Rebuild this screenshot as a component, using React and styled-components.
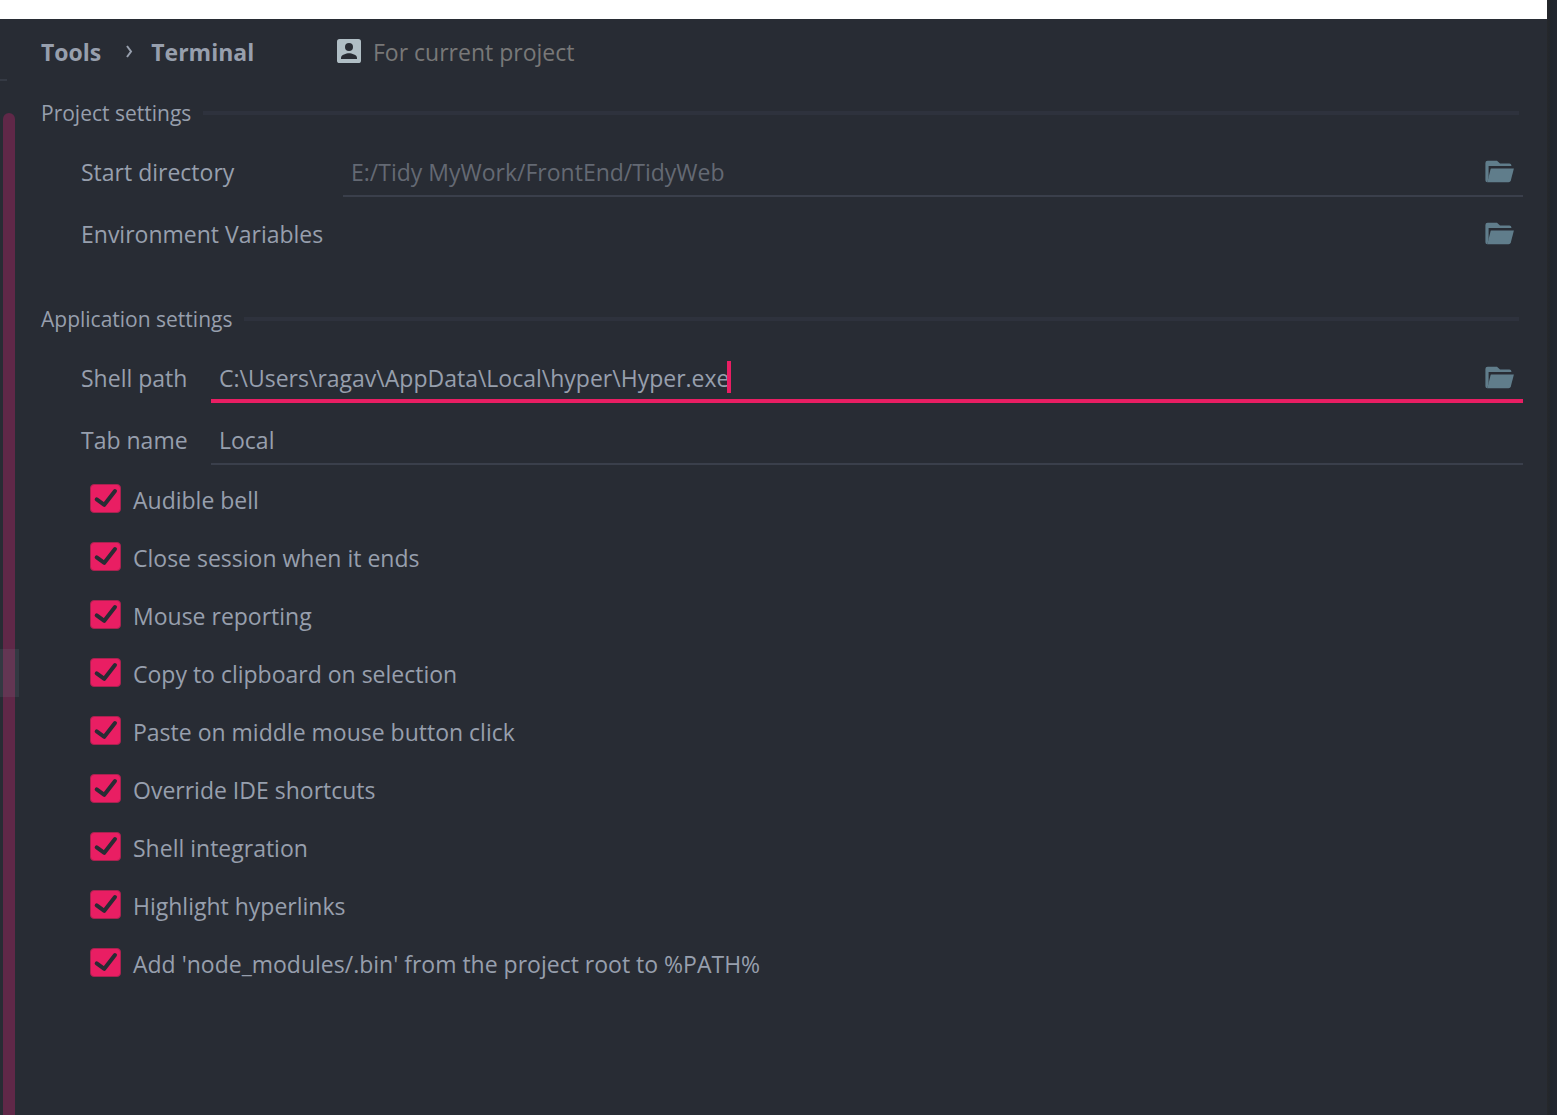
import React, { useState } from "react";
import styled, { createGlobalStyle } from "styled-components";

const accent = "#e91e63";
const surface = "#282c34";
const text = "#979fad";
const line = "#3a3f4b";

const GlobalStyle = createGlobalStyle`
  *, *::before, *::after { box-sizing: border-box; }
  body {
    margin: 0;
    background: ${surface};
    color: ${text};
    font-family: "Open Sans", "Noto Sans", sans-serif;
    font-size: 23px;
    line-height: 32px;
  }
  input, button { font: inherit; color: inherit; }
`;

const Window = styled.div`
  display: flex;
  min-height: 100vh;
`;

const Dialog = styled.div`
  flex: 1;
  min-width: 0;
  display: flex;
  flex-direction: column;
`;

const TitleBar = styled.div`
  height: 19px;
  background: #ffffff;
`;

const Body = styled.div`
  flex: 1;
  display: flex;
`;

const WindowEdge = styled.div`
  width: 10px;
  background: linear-gradient(to right, #26282b, #20252c 40%, #222730);
`;

const Tree = styled.aside`
  position: relative;
  width: 19px;
  display: flex;
  flex-direction: column;
`;

const TreeSearch = styled.div`
  width: 7px;
  height: 62px;
  margin-bottom: 32px;
  border-bottom: 2px solid #353a44;
`;

const ScrollThumb = styled.div`
  flex: 1;
  width: 12px;
  margin-left: 3px;
  border-radius: 6px 6px 0 0;
  background: #602848;
`;

const TreeSelection = styled.div`
  position: absolute;
  top: 630px;
  left: 0;
  width: 100%;
  height: 48px;
  background: rgba(120, 144, 156, 0.14);
`;

const Content = styled.main`
  flex: 1;
  min-width: 0;
  padding: 0 24px 40px 22px;
`;

const Header = styled.header`
  display: flex;
  align-items: center;
  height: 68px;
  padding-bottom: 2px;
`;

const Crumbs = styled.nav`
  display: flex;
  align-items: center;
  gap: 18px;
  width: 296px;
  font-weight: 700;
  svg { margin-left: 6px; }
`;

const Crumb = styled.a`
  color: inherit;
  text-decoration: none;
`;

const Scope = styled.div`
  display: flex;
  align-items: center;
  gap: 12px;
  color: #787878;
  svg { margin-bottom: 2px; }
`;

const Section = styled.section`
  margin-bottom: 34px;
`;

const SectionTitle = styled.h2`
  display: flex;
  align-items: center;
  gap: 12px;
  height: 52px;
  margin: 0 4px 10px 0;
  font-size: 21px;
  font-weight: 400;
  &::after {
    content: "";
    flex: 1;
    height: 4px;
    background: #2e323d;
  }
`;

const Fields = styled.div`
  display: flex;
  flex-direction: column;
  gap: 14px;
  padding-left: 40px;
`;

const Row = styled.div`
  display: grid;
  grid-template-columns: ${(p) => p.$label}px 1fr;
  align-items: center;
  height: 48px;
`;

const Label = styled.label`
  padding-bottom: 2px;
  white-space: nowrap;
`;

const Field = styled.div`
  display: flex;
  align-items: center;
  height: 48px;
  padding: 0 8px 2px;
  box-shadow: ${(p) =>
    p.$plain ? "none" : p.$active ? `inset 0 -4px ${accent}` : `inset 0 -2px ${line}`};
`;

const TextInput = styled.input`
  flex: ${(p) => (p.$active ? "none" : 1)};
  field-sizing: ${(p) => (p.$active ? "content" : "fixed")};
  min-width: 0;
  padding: 0;
  border: 0;
  outline: 0;
  background: transparent;
  color: ${(p) => (p.$dim ? "#646973" : text)};
`;

const Caret = styled.span`
  width: 4px;
  height: 32px;
  margin: 0 0 2px -2px;
  background: ${accent};
`;

const BrowseButton = styled.button`
  display: flex;
  margin: 0 0 2px auto;
  padding: 0;
  border: 0;
  background: none;
`;

const Options = styled.div`
  margin-top: 6px;
  padding-left: 49px;
`;

const Option = styled.label`
  display: flex;
  align-items: center;
  gap: 12px;
  height: 58px;
`;

const Tick = styled.span`
  display: grid;
  width: 31px;
  height: 29px;
  margin-bottom: 4px;
  > * { grid-area: 1 / 1; }
  svg { pointer-events: none; }
`;

const Checkbox = styled.input`
  appearance: none;
  width: 31px;
  height: 29px;
  margin: 0;
  border: 1px solid #a8224f;
  border-radius: 4px;
  background: ${surface};
  &:checked { background: ${accent}; }
`;

function FolderIcon() {
  return (
    <svg width="30" height="23" viewBox="0 0 30 23" fill="#607d8b" aria-hidden="true">
      <path d="M2.600 .8H12l3 2.700h9.400a2 2 0 0 1 2 2v.5H3.600V17L2.400 22.300A2 2 0 0 1 .4 20.300V3A2.200 2.200 0 0 1 2.600 .8Z" />
      <path d="M6.200 8.400H28.900L25.800 20.500a2.400 2.400 0 0 1-2.200 1.800H2.300L5.700 8.800Z" />
    </svg>
  );
}

function PersonIcon() {
  return (
    <svg width="24" height="24" viewBox="0 0 24 24" aria-hidden="true">
      <rect width="24" height="24" rx="2.6" fill="#b0bec5" />
      <circle cx="12" cy="8" r="4" fill={surface} />
      <path d="M4 20v-1.3c0-2.8 5.300-4.500 8-4.500s8 1.700 8 4.500V20Z" fill={surface} />
    </svg>
  );
}

function Chevron() {
  return (
    <svg width="8" height="16" viewBox="0 0 8 16" aria-hidden="true">
      <path d="M2 2l4 5.500-4 5.500" fill="none" stroke={text} strokeWidth="2" />
    </svg>
  );
}

function PathRow({ id, name, label, value, dim, plain, active, browse }) {
  const [current, setCurrent] = useState(value);
  return (
    <Row $label={label}>
      <Label htmlFor={id}>{name}</Label>
      <Field $plain={plain} $active={active}>
        <TextInput
          id={id}
          value={current}
          $dim={dim}
          $active={active}
          spellCheck={false}
          onChange={(e) => setCurrent(e.target.value)}
        />
        {active && <Caret />}
        {browse && (
          <BrowseButton type="button" aria-label={`Browse ${name}`}>
            <FolderIcon />
          </BrowseButton>
        )}
      </Field>
    </Row>
  );
}

const options = [
  "Audible bell",
  "Close session when it ends",
  "Mouse reporting",
  "Copy to clipboard on selection",
  "Paste on middle mouse button click",
  "Override IDE shortcuts",
  "Shell integration",
  "Highlight hyperlinks",
  "Add 'node_modules/.bin' from the project root to %PATH%",
];

export default function App() {
  return (
    <Window>
      <GlobalStyle />
      <Dialog>
        <TitleBar />
        <Body>
          <Tree>
            <TreeSearch />
            <ScrollThumb />
            <TreeSelection />
          </Tree>
          <Content>
            <Header>
              <Crumbs>
                <Crumb href="#tools">Tools</Crumb>
                <Chevron />
                <Crumb href="#terminal">Terminal</Crumb>
              </Crumbs>
              <Scope>
                <PersonIcon />
                <span>For current project</span>
              </Scope>
            </Header>

            <Section>
              <SectionTitle>Project settings</SectionTitle>
              <Fields>
                <PathRow id="start" name="Start directory" label={262} value="E:/Tidy MyWork/FrontEnd/TidyWeb" dim browse />
                <PathRow id="env" name="Environment Variables" label={262} value="" plain browse />
              </Fields>
            </Section>

            <Section>
              <SectionTitle>Application settings</SectionTitle>
              <Fields>
                <PathRow id="shell" name="Shell path" label={130} value="C:\Users\ragav\AppData\Local\hyper\Hyper.exe" active browse />
                <PathRow id="tab" name="Tab name" label={130} value="Local" />
              </Fields>
              <Options>
                {options.map((name) => (
                  <Option key={name}>
                    <Tick>
                      <Checkbox type="checkbox" defaultChecked />
                      <svg width="31" height="29" viewBox="0 0 31 29" aria-hidden="true">
                        <path d="M6.700 15.300l7.600 5.500L25 7" fill="none" stroke={surface} strokeWidth="4" strokeLinecap="round" strokeLinejoin="round" />
                      </svg>
                    </Tick>
                    <span>{name}</span>
                  </Option>
                ))}
              </Options>
            </Section>
          </Content>
        </Body>
      </Dialog>
      <WindowEdge />
    </Window>
  );
}
